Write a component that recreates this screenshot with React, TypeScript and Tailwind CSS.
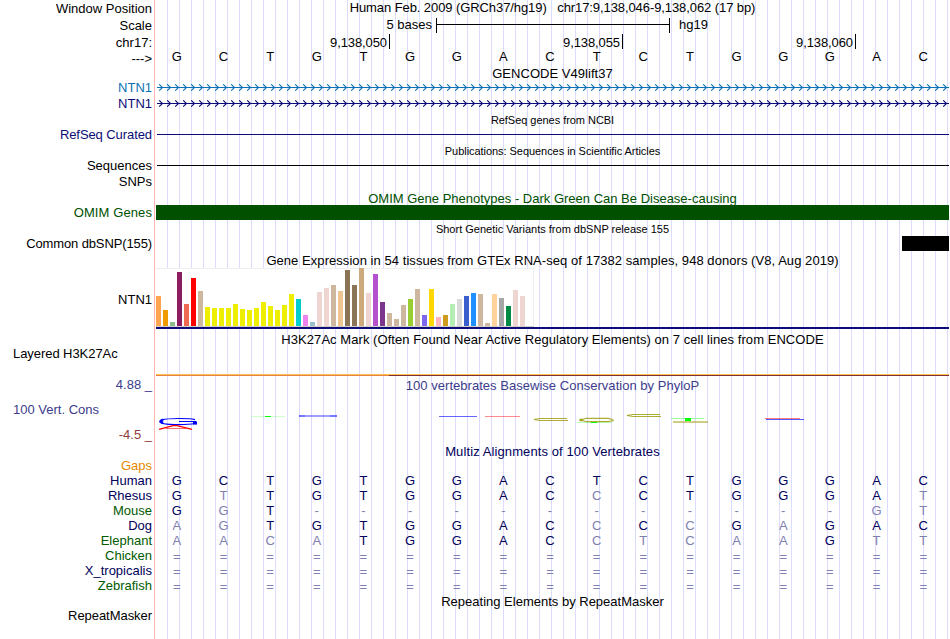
import type { ReactNode } from "react";
import { cva } from "class-variance-authority";
import clsx from "clsx";

interface Label {
  text: string;
  className: string;
}

// Height of each label reserves the space down to the next one
const labels: Label[] = [
  { text: "Window Position", className: "h-[17px]" },
  { text: "Scale", className: "h-[17px]" },
  { text: "chr17:", className: "h-[15px]" },
  { text: "--->", className: "h-[30px] pt-px" },
  { text: "NTN1", className: "h-4 text-[#0c72b4]" },
  { text: "NTN1", className: "h-[31px] text-[#0c0c78]" },
  { text: "RefSeq Curated", className: "h-[31px] tracking-[-0.08px] text-[#0c0c78]" },
  { text: "Sequences", className: "h-4" },
  { text: "SNPs", className: "h-[31px]" },
  { text: "OMIM Genes", className: "h-[31px] tracking-[0.1px] text-[#005000]" },
  { text: "Common dbSNP(155)", className: "h-14 tracking-[-0.12px]" },
  { text: "NTN1", className: "h-[54px]" },
  { text: "Layered H3K27Ac", className: "h-[31px] text-left tracking-[-0.06px]" },
  { text: "4.88 _", className: "h-[25px] text-[#3c3c8c]" },
  { text: "100 Vert. Cons", className: "h-[25px] text-left text-[#3c3c8c]" },
  { text: "-4.5 _", className: "h-[31px] text-[#8c3c3c]" },
  { text: "Gaps", className: "h-[15px] text-[#e68a00]" },
  { text: "Human", className: "h-[15px] text-[#00005a]" },
  { text: "Rhesus", className: "h-[15px] text-[#00005a]" },
  { text: "Mouse", className: "h-[15px] text-[#005a00]" },
  { text: "Dog", className: "h-[15px] text-[#00005a]" },
  { text: "Elephant", className: "h-[15px] text-[#005a00]" },
  { text: "Chicken", className: "h-[15px] text-[#005a00]" },
  { text: "X_tropicalis", className: "h-[15px] text-[#00005a]" },
  { text: "Zebrafish", className: "h-[30px] text-[#005a00]" },
  { text: "RepeatMasker", className: "h-[15px] tracking-[-0.05px]" },
];

// Lower case marks a base that differs from the human one
const alignments = [
  "GCTGTGGACTCTGGGAC",
  "GtTGTGGACcCTGGGAt",
  "GgT------------gt",
  "agTGTGGACcCcGaGAC",
  "aacaTGGACctcaaGtt",
  "=================",
  "=================",
  "=================",
];

const tissues: [number, string][] = [
  [30, "#ffa54f"], [16, "#ee9a00"], [4, "#8fbc8f"], [54, "#8b1c62"], [22, "#ee6a50"],
  [48, "#ff0000"], [35, "#cdb79e"], [19, "#eeee00"], [18, "#eeee00"], [18, "#eeee00"],
  [18, "#eeee00"], [22, "#eeee00"], [17, "#eeee00"], [16, "#eeee00"], [18, "#eeee00"],
  [24, "#eeee00"], [20, "#eeee00"], [16, "#eeee00"], [21, "#eeee00"], [32, "#eeee00"],
  [27, "#00cdcd"], [11, "#ee82ee"], [4, "#9ac0cd"], [34, "#eed5d2"], [38, "#eed5d2"],
  [41, "#cdb79e"], [35, "#eec591"], [56, "#8b7355"], [41, "#8b7355"], [58, "#cdaa7d"],
  [33, "#eed5d2"], [52, "#b452cd"], [24, "#7a378b"], [13, "#cdb79e"], [7, "#cdb79e"],
  [21, "#cdb79e"], [27, "#9acd32"], [37, "#cdb79e"], [11, "#7a67ee"], [37, "#ffd700"],
  [9, "#ffb6c1"], [11, "#cd9b1d"], [22, "#b4eeb4"], [27, "#d9d9d9"], [30, "#3a5fcd"],
  [33, "#1e90ff"], [32, "#cdb79e"], [3, "#cdb79e"], [32, "#ffd39b"], [28, "#a6a6a6"],
  [20, "#008b45"], [36, "#eed5d2"], [30, "#eed5d2"], [0, "#ff00ff"],
];

const title = cva("text-center", {
  variants: {
    size: {
      normal: "text-[13px]",
      small: "text-[11px]",
    },
  },
  defaultVariants: { size: "normal" },
});

function Title({ children, small, className }: { children: ReactNode; small?: boolean; className?: string }) {
  return (
    <div className={clsx(title({ size: small ? "small" : "normal" }), className)}>
      <span>{children}</span>
    </div>
  );
}

function Bases({ sequence, className }: { sequence: string; className?: string }) {
  return (
    <div className={clsx("-ml-[2.5px] grid w-[793px] grid-cols-17 text-center", className)}>
      {sequence.split("").map((base, i) => (
        <span key={i} className={clsx(/[a-z=-]/.test(base) && "text-[#8080b0]", base === "=" && "pt-px")}>
          {base.toUpperCase()}
        </span>
      ))}
    </div>
  );
}

function Intron({ className }: { className: string }) {
  const arrows = Array.from({ length: 99 }, (_, i) => `M${3.2 + i * 8} .4l3.3 3.1l-3.3 3.1`);
  return (
    <svg className={clsx("block h-[7px] w-[793px]", className)} viewBox="0 0 793 7" fill="none" stroke="currentColor">
      <path d="M1 3.5H793" />
      <path d={arrows.join("")} strokeWidth="1.15" />
    </svg>
  );
}

function Expression() {
  return (
    <div className="h-[61px] border-b-2 border-[#0c0c78]">
      <div className="flex h-[59px] w-[378px] items-end gap-[2px] border-t border-r border-b border-t-[#eeeeee] border-r-[#eeeeee] border-b-[#d4d0c8] bg-white">
        {tissues.map(([height, color], i) => (
          <div key={i} className="w-[5px] shrink-0" style={{ height, backgroundColor: color }} />
        ))}
      </div>
    </div>
  );
}

// Sequence logo squashed by near-zero conservation scores
function PhyloP() {
  return (
    <svg className="block h-[50px] w-[793px]" viewBox="156 392 793 50" fill="none">
      <path d="M195 419.6C189 418.1 168 418.1 162 419.9C157 421.5 160 423.8 170 424.4C180 424.8 190 424.4 195 423.5" stroke="#0000ff" strokeWidth="1.1" />
      <path d="M163 419.6C160.5 420.8 160.5 421.8 163 423" stroke="#0000ff" strokeWidth="2.6" />
      <path d="M179 421.5H196" stroke="#0000ff" />
      <path d="M193 421.5H197V424.6H193z" fill="#0000ff" />
      <path d="M159 429.3L173 425.7H177L192 429.3" stroke="#ff0000" strokeWidth="1.3" />
      <path d="M166 428.5H186" stroke="#ff0000" strokeOpacity=".55" />

      <path d="M251 416.5H285" stroke="#00ff00" strokeOpacity=".2" />
      <path d="M265 416.5H271" stroke="#00ff00" />
      <path d="M299 416H337" stroke="#0000ff" strokeOpacity=".5" strokeWidth="1.3" />
      <path d="M299 416H305M330 416H337" stroke="#0000ff" strokeOpacity=".5" />
      <path d="M439 416.5H477" stroke="#0000ff" strokeOpacity=".6" />
      <path d="M485 416.5H520" stroke="#ff0000" strokeOpacity=".45" />

      <g stroke="#999900" strokeOpacity=".8">
        <path d="M567 418.5H540L534 419.5L540 420.5H568" />
        <path d="M613 419.5L608 418.3H586L581 420L586 421.7H608L614 420.5" strokeWidth="1.2" />
        <path d="M581 418.7V421.3" strokeWidth="3" />
        <path d="M660 414.5H633L627 415.5L633 416.5H661" />
        <path d="M673 422H708" strokeWidth="1.6" strokeOpacity=".65" />
      </g>
      <path d="M577 422.5H612" stroke="#00ff00" strokeOpacity=".25" />
      <path d="M591 422.5H597" stroke="#00ff00" />
      <path d="M671 418.5H704" stroke="#00ff00" strokeOpacity=".4" />
      <path d="M685 418H691V421H685z" fill="#00ff00" />
      <path d="M765 418.5H800" stroke="#ff0000" strokeOpacity=".5" />
      <path d="M766 419.5H804" stroke="#0000ff" strokeOpacity=".65" />
    </svg>
  );
}

export default function App() {
  return (
    <div className="flex h-[639px] w-[950px] overflow-hidden bg-white font-['Liberation_Sans',Arial,sans-serif] text-[13px] leading-[15px] text-black">
      <div className="w-[154px] shrink-0 pt-px pr-[2px] pl-[13px] text-right whitespace-nowrap">
        {labels.map(({ text, className }, i) => (
          <div key={i} className={className}>{text}</div>
        ))}
      </div>

      <div className="h-full border-l border-[#ffb4b4] pl-px">
        <div className="h-full w-[793px] bg-[repeating-linear-gradient(90deg,transparent_0px,transparent_11px,#dcdcff_11px,#dcdcff_12px)] whitespace-pre">
          <Title className="h-[17px] tracking-[-0.085px]">{"Human Feb. 2009 (GRCh37/hg19)   chr17:9,138,046-9,138,062 (17 bp)"}</Title>

          <div className="flex h-[17px]">
            <div className="w-[280px] pr-[4px] text-right">5 bases</div>
            <div className="mt-px flex h-[15px] w-[234px] items-start border-x border-black pt-[6px]">
              <div className="h-px w-full bg-black" />
            </div>
            <div className="pl-[9px]">hg19</div>
          </div>

          <div className="flex h-[15px] items-start text-right leading-[17px] tracking-[-0.1px]">
            <div className="h-[15px] w-[234px] border-r border-black pr-[2px]">9,138,050</div>
            <div className="h-[15px] w-[233px] border-r border-black pr-[2px]">9,138,055</div>
            <div className="h-[15px] w-[233px] border-r border-black pr-[2px]">9,138,060</div>
          </div>
          <Bases sequence={alignments[0]} className="h-[17px]" />

          <Title className="h-[18px] tracking-[0.04px]">GENCODE V49lift37</Title>
          <Intron className="mb-[9px] text-[#0c72b4]" />
          <Intron className="mb-[6px] text-[#0c0c78]" />

          <Title small className="h-[21px] tracking-[-0.04px]">RefSeq genes from NCBI</Title>
          <div className="mb-[9px] ml-px h-px bg-[#0c0c78]" />
          <Title small className="h-[21px] tracking-[-0.05px]">Publications: Sequences in Scientific Articles</Title>
          <div className="mb-[25px] ml-px h-px bg-black" />

          <Title className="h-[14px] text-[#005000]">OMIM Gene Phenotypes - Dark Green Can Be Disease-causing</Title>
          <div className="h-[15px] bg-[#005000]" />
          <Title small className="h-4 pt-[2px]">Short Genetic Variants from dbSNP release 155</Title>
          <div className="ml-auto h-[15px] w-[47px] bg-black" />

          <Title className="mt-[2px] h-[15px] tracking-[0.055px]">Gene Expression in 54 tissues from GTEx RNA-seq of 17382 samples, 948 donors (V8, Aug 2019)</Title>
          <Expression />

          <Title className="mt-[3px] h-[42px] tracking-[0.055px]">H3K27Ac Mark (Often Found Near Active Regulatory Elements) on 7 cell lines from ENCODE</Title>
          <div className="flex h-[2px]">
            <div className="w-[233px] border-t border-b border-t-[#ffc04c] border-b-[#e88048]" />
            <div className="flex-1 border-t border-b border-t-[#ffc04c] border-b-[#80303c]" />
          </div>

          <Title className="mt-[2px] h-[14px] tracking-[0.03px] text-[#3c3c8c]">100 vertebrates Basewise Conservation by PhyloP</Title>
          <PhyloP />
          <Title className="mt-[2px] h-[29px] tracking-[0.1px] text-[#00005a]">Multiz Alignments of 100 Vertebrates</Title>
          {alignments.map((sequence, i) => (
            <Bases key={i} sequence={sequence} className="h-[15px] text-[#00005a]" />
          ))}
          <Title className="mt-px">Repeating Elements by RepeatMasker</Title>
        </div>
      </div>
    </div>
  );
}
